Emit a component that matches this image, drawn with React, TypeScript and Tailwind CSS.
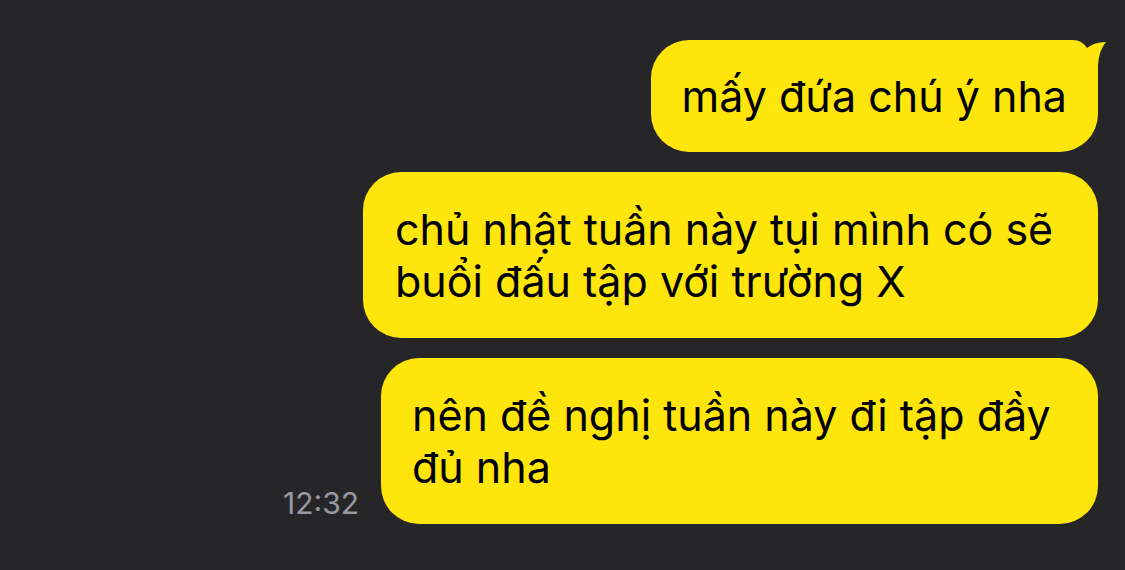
import React from 'react'

const font = { fontFamily: 'Inter, "Noto Sans", sans-serif' }

const Tail = () => (
  <svg
    className="absolute top-[-2px] right-[-10px]"
    width="50"
    height="40"
    viewBox="0 0 50 40"
  >
    <path
      d="M0 2 L15 2 Q24 2 29 10 Q36 4 48 4 Q41 12 40 27 L40 40 L0 40 Z"
      fill="#fee50c"
    />
  </svg>
)

export default function App() {
  return (
    <div className="min-h-screen w-full bg-[#262628] pt-10 pr-[27px]" style={font}>
      <div className="flex flex-col items-end gap-5">
        {/* first bubble with tail */}
        <div className="relative rounded-[38px] bg-[#fee50c] px-[31px] py-[30px] text-[43px] leading-[52px] text-black">
          <Tail />
          <span className="relative whitespace-nowrap">mấy đứa chú ý nha</span>
        </div>

        <div className="w-[735px] rounded-[38px] bg-[#fee50c] px-[32px] py-[31px] text-[43px] leading-[52px] text-black">
          chủ nhật tuần này tụi mình có sẽ
          <br />
          buổi đấu tập với trường X
        </div>

        <div className="flex items-end gap-[22px]">
          <span className="mb-[6px] text-[30px] leading-none text-[#98989f]">12:32</span>
          <div className="w-[717px] rounded-[38px] bg-[#fee50c] px-[31px] py-[31px] text-[43px] leading-[52px] text-black">
            nên đề nghị tuần này đi tập đầy
            <br />
            đủ nha
          </div>
        </div>
      </div>
    </div>
  )
}
